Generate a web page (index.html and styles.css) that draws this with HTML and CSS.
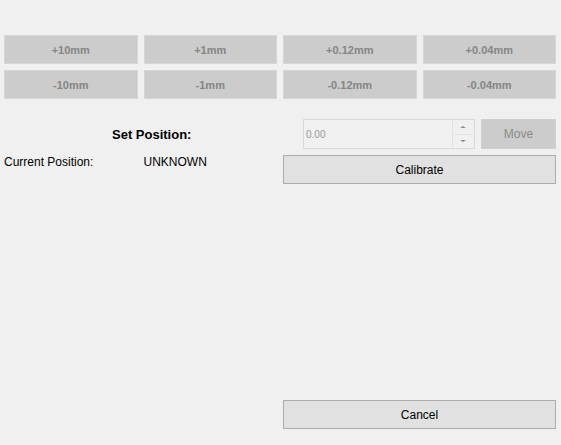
FILE: index.html
```html
<!DOCTYPE html>
<html>
<head>
<meta charset="utf-8">
<link rel="stylesheet" href="styles.css">
</head>
<body>
<div class="window">
  <div class="jog-grid">
    <button class="jog">+10mm</button>
    <button class="jog">+1mm</button>
    <button class="jog">+0.12mm</button>
    <button class="jog">+0.04mm</button>
    <button class="jog">-10mm</button>
    <button class="jog">-1mm</button>
    <button class="jog">-0.12mm</button>
    <button class="jog">-0.04mm</button>
  </div>
  <div class="controls">
    <div class="left">
      <div class="set-label">Set Position:</div>
      <div class="cur-row">
        <span class="cur-label">Current Position:</span>
        <span class="cur-value">UNKNOWN</span>
      </div>
    </div>
    <div class="right">
      <div class="set-row">
        <div class="spinbox">
          <span class="spin-text">0.00</span>
          <div class="spin-btns">
            <div class="spin-btn"><span class="arrow-up"></span></div>
            <div class="spin-btn"><span class="arrow-down"></span></div>
          </div>
        </div>
        <button class="move">Move</button>
      </div>
      <button class="action">Calibrate</button>
    </div>
  </div>
  <div class="footer">
    <div class="spacer"></div>
    <button class="action">Cancel</button>
  </div>
</div>
</body>
</html>
```
FILE: styles.css
```css
html, body {
  margin: 0;
  padding: 0;
  background: #f0f0f0;
}
body {
  font-family: "Liberation Sans", Arial, sans-serif;
  font-size: 12px;
  color: #000;
}
.window {
  width: 561px;
  height: 445px;
  box-sizing: border-box;
  padding: 35px 5px 16px 4px;
  display: flex;
  flex-direction: column;
}
.jog-grid {
  display: grid;
  grid-template-columns: repeat(4, 1fr);
  grid-auto-rows: 29px;
  gap: 6px;
}
button {
  font-family: inherit;
  margin: 0;
  box-sizing: border-box;
}
.jog {
  background: #cccccc;
  border: 1px solid #d6d6d6;
  color: #858585;
  font-weight: bold;
  font-size: 11px;
  padding: 0;
}
.controls {
  display: grid;
  grid-template-columns: 1fr 1fr;
  column-gap: 6px;
  margin-top: 20px;
}
.left {
  display: flex;
  flex-direction: column;
}
.set-label {
  height: 30px;
  line-height: 32px;
  font-weight: bold;
  font-size: 13px;
  padding-left: 108px;
}
.cur-row {
  display: grid;
  grid-template-columns: 1fr 1fr;
  column-gap: 6px;
  margin-top: 6px;
  line-height: 14px;
}
.right {
  display: flex;
  flex-direction: column;
  gap: 6px;
}
.set-row {
  display: flex;
  gap: 6px;
  padding-left: 20px;
  height: 30px;
}
.spinbox {
  flex: 1;
  display: flex;
  align-items: center;
  border: 1px solid #d9d9d9;
  background: #f0f0f0;
  box-sizing: border-box;
}
.spin-text {
  flex: 1;
  color: #9a9a9a;
  font-size: 10px;
  padding-left: 2px;
}
.spin-btns {
  width: 21px;
  height: 28px;
  display: flex;
  flex-direction: column;
  margin-right: 1px;
  border-left: 1px solid #e2e2e2;
  box-sizing: border-box;
}
.spin-btn {
  flex: 1;
  display: flex;
  align-items: center;
  justify-content: center;
}
.spin-btn + .spin-btn {
  border-top: 1px solid #e2e2e2;
}
.arrow-up {
  width: 0;
  height: 0;
  border-left: 3px solid transparent;
  border-right: 3px solid transparent;
  border-bottom: 2px solid #8a8a8a;
}
.arrow-down {
  width: 0;
  height: 0;
  border-left: 3px solid transparent;
  border-right: 3px solid transparent;
  border-top: 2px solid #8a8a8a;
}
.move {
  width: 75px;
  background: #cccccc;
  border: 1px solid #d0d0d0;
  color: #8a8a8a;
  font-size: 12px;
  padding: 0;
}
.action {
  height: 29px;
  background: #e1e1e1;
  border: 1px solid #adadad;
  color: #000;
  font-size: 12px;
  padding: 0;
}
.footer {
  flex: 1;
  display: grid;
  grid-template-columns: 1fr 1fr;
  column-gap: 6px;
  align-items: end;
}
```
